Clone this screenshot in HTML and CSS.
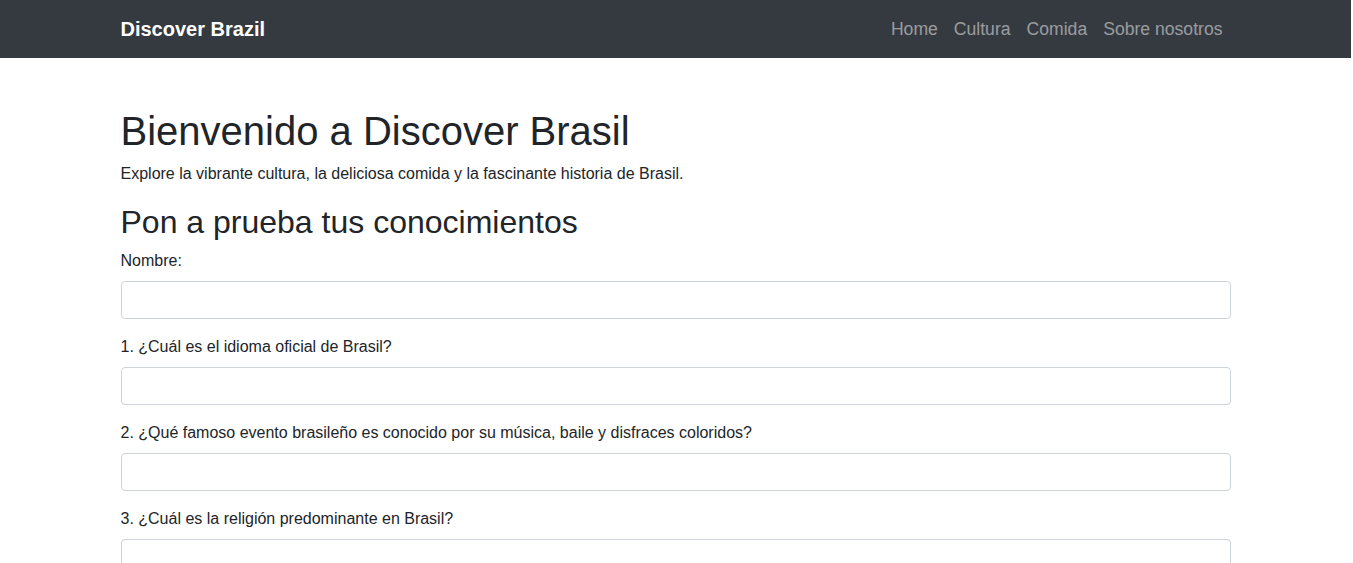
FILE: index.html
```html
<!DOCTYPE html>
<html lang="es">
<head>
<meta charset="utf-8">
<title>Discover Brazil</title>
<link rel="stylesheet" href="styles.css">
</head>
<body>
<nav class="navbar">
  <div class="container nav-inner">
    <a class="brand" href="#">Discover Brazil</a>
    <ul class="nav-links">
      <li><a href="#">Home</a></li>
      <li><a href="#">Cultura</a></li>
      <li><a href="#">Comida</a></li>
      <li><a href="#">Sobre nosotros</a></li>
    </ul>
  </div>
</nav>
<main class="container main">
  <h1>Bienvenido a Discover Brasil</h1>
  <p class="lead">Explore la vibrante cultura, la deliciosa comida y la fascinante historia de Brasil.</p>
  <h2>Pon a prueba tus conocimientos</h2>
  <form class="quiz">
    <div class="form-group">
      <label for="nombre">Nombre:</label>
      <input id="nombre" type="text" class="form-control">
    </div>
    <div class="form-group">
      <label for="q1">1. ¿Cuál es el idioma oficial de Brasil?</label>
      <input id="q1" type="text" class="form-control">
    </div>
    <div class="form-group">
      <label for="q2">2. ¿Qué famoso evento brasileño es conocido por su música, baile y disfraces coloridos?</label>
      <input id="q2" type="text" class="form-control">
    </div>
    <div class="form-group">
      <label for="q3">3. ¿Cuál es la religión predominante en Brasil?</label>
      <input id="q3" type="text" class="form-control">
    </div>
  </form>
</main>
</body>
</html>
```
FILE: styles.css
```css
* { box-sizing: border-box; }
html, body { margin: 0; }
body {
  font-family: "Liberation Sans", Arial, Helvetica, sans-serif;
  font-size: 16px;
  line-height: 1.5;
  color: #212529;
  background: #fff;
  margin-right: 2px;
}
.container {
  width: 100%;
  max-width: 1140px;
  padding: 0 15px;
  margin: 0 auto;
}
.navbar {
  background: #343a40;
  height: 58px;
}
.nav-inner {
  display: flex;
  align-items: center;
  justify-content: space-between;
  height: 100%;
}
.brand {
  color: #fff;
  font-weight: bold;
  font-size: 20px;
  line-height: 30px;
  text-decoration: none;
}
.nav-links {
  display: flex;
  list-style: none;
  margin: 0;
  padding: 0;
}
.nav-links a {
  display: block;
  padding: 8px 8px;
  color: rgba(255,255,255,.5);
  text-decoration: none;
  font-size: 17.6px;
  line-height: 24px;
}
.main { padding-top: 49px; }
h1 {
  font-size: 40px;
  font-weight: 500;
  line-height: 1.2;
  margin: 0 0 7px;
}
.lead { margin: 0 0 17px; }
h2 {
  font-size: 32px;
  font-weight: 500;
  line-height: 1.2;
  margin: 0 0 8px;
}
.form-group { margin-bottom: 16px; }
.form-group label {
  display: inline-block;
  margin-bottom: 8px;
}
.form-control {
  display: block;
  width: 100%;
  height: 38px;
  padding: 6px 12px;
  font: inherit;
  color: #495057;
  background: #fff;
  border: 1px solid #ced4da;
  border-radius: 4px;
}
```
